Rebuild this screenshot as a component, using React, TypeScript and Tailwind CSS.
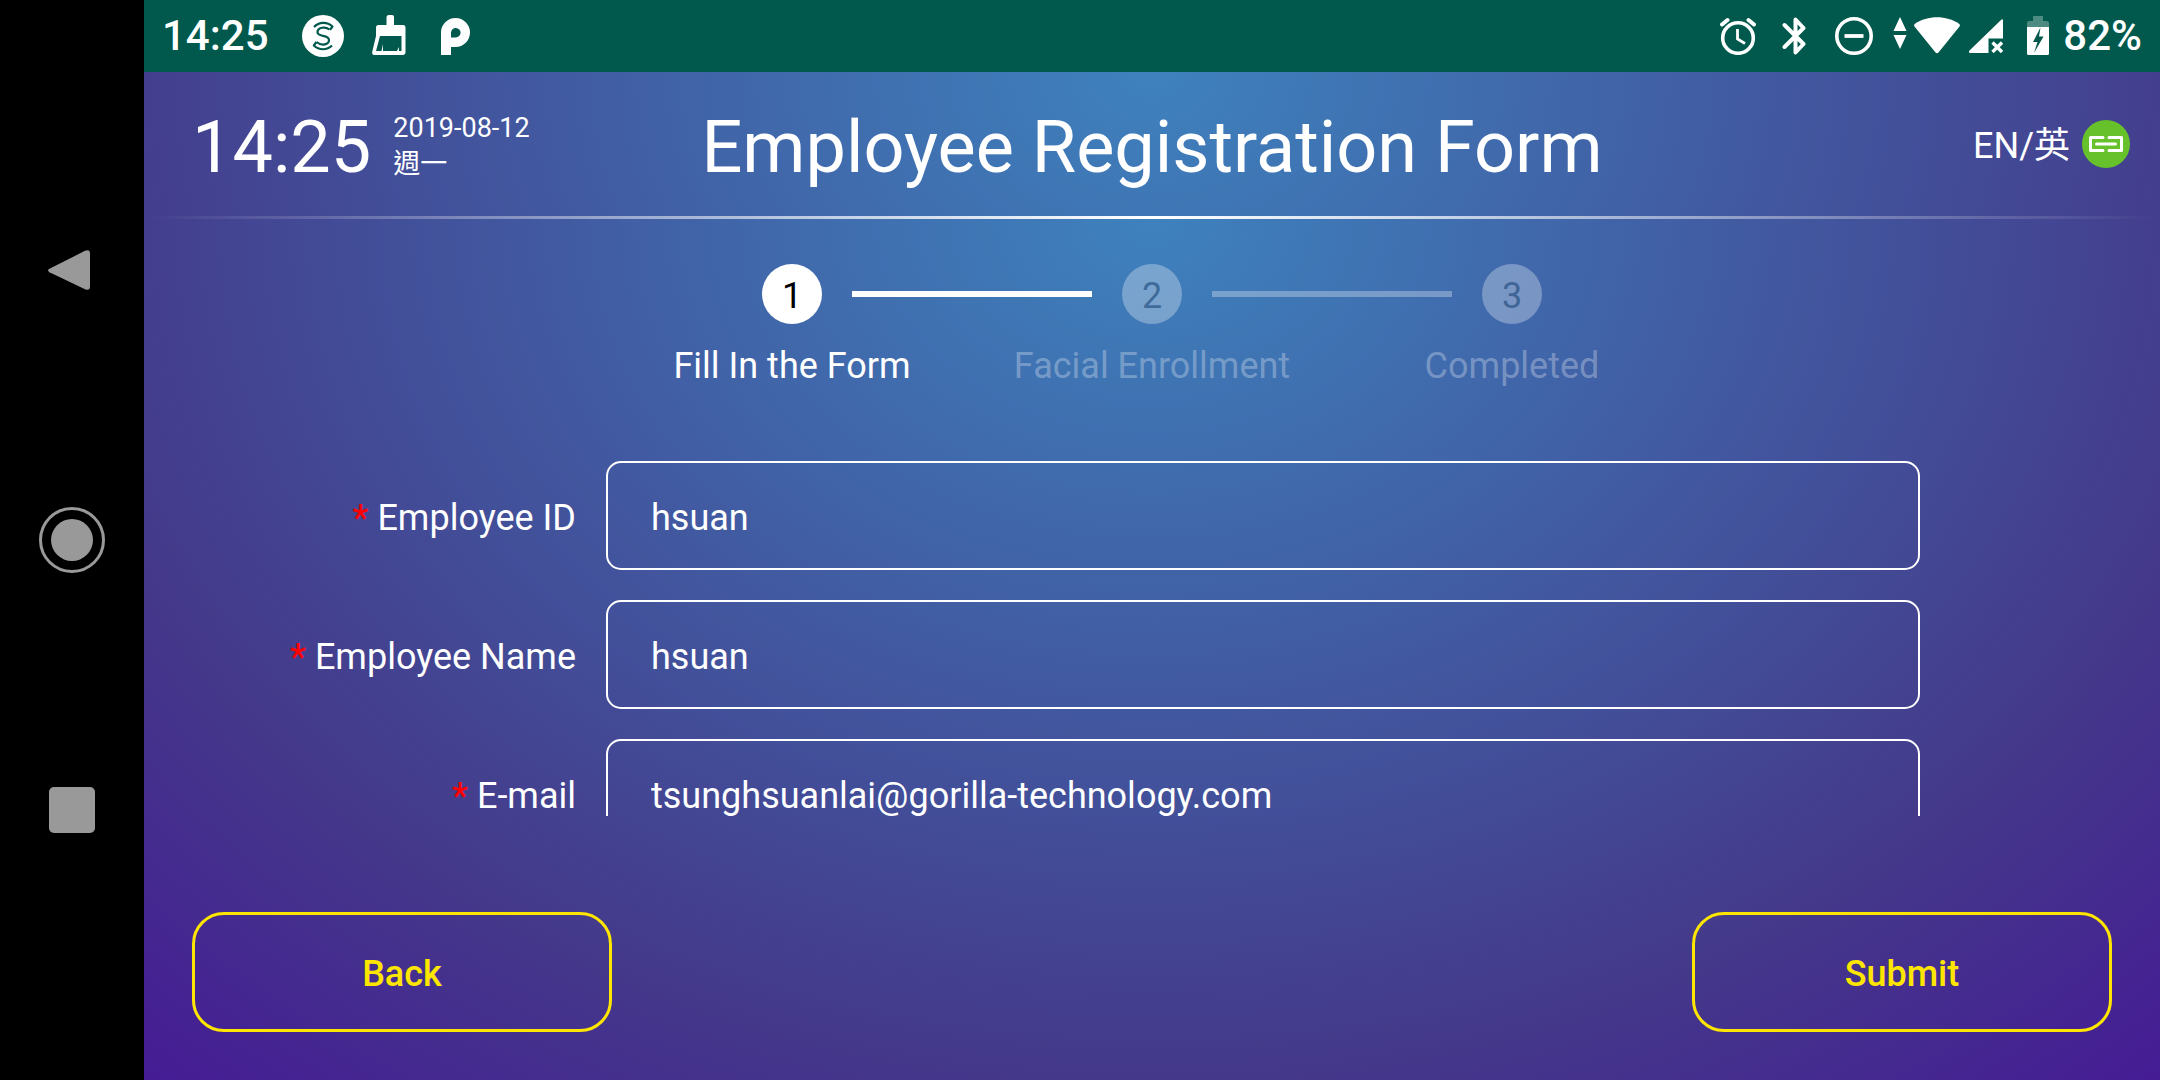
import type { ReactNode } from "react";

function StatusBar() {
  return (
    <header className="flex h-[72px] shrink-0 items-center justify-between bg-[#00594c] px-[18px] text-[42px] leading-[72px] font-medium">
      <div className="flex items-center">
        <span>14:25</span>
        <svg className="ml-[33px] size-[42px]" viewBox="0 0 42 42" fill="none" aria-hidden="true">
          <circle cx="21" cy="21" r="21" fill="#fff" />
          <g stroke="#00594c" strokeWidth="2.2" strokeLinejoin="round">
            <path d="M12 12C17 6.800 25 6.500 30.500 11.500L28 14.800" />
            <path d="M27.500 14.500C23 11 15.500 12.500 15.500 17.300C15.500 22.500 27 19 27 25C27 29.500 20 31.500 14.500 27" />
            <path d="M14.500 27L11.800 30.500C17 35.500 25 35.500 30 30.500" />
          </g>
        </svg>
        <svg className="ml-[28px] h-[42px] w-[34px]" viewBox="0 0 34 42" aria-hidden="true">
          <path
            fill="#fff"
            fillRule="evenodd"
            d="M17 0H20Q22 0 22 2V10H31Q33.500 10 33.500 12.500V37Q33.500 40 30.500 40H3Q-.5 40 .3 36.500L4 21V12.500Q4 10 6.500 10H14.500V2Q14.500 0 17 0ZM8 21L4 36H9.500L11 29V36H25L27 32V36H29.500V21Z"
          />
        </svg>
        <svg className="ml-[35px] h-[37px] w-[29px]" viewBox="0 0 29 37" aria-hidden="true">
          <path
            fill="#fff"
            fillRule="evenodd"
            d="M0 37V14.500A14.500 14.500 0 1 1 14.500 29H10V37ZM10 19.500V14.500A4.800 4.800 0 1 1 14.800 19.500Z"
          />
        </svg>
      </div>
      <div className="flex items-center">
        <svg className="h-[38px] w-[36px]" viewBox="0 0 36 38" fill="none" stroke="#fff" aria-hidden="true">
          <circle cx="18" cy="21" r="15.300" strokeWidth="3.600" />
          <path d="M2 7.500L7.500 3M34 7.500L28.500 3" strokeWidth="4" strokeLinecap="round" />
          <path d="M17.500 12V22L25 26.500" strokeWidth="2.800" />
        </svg>
        <svg className="ml-[26px] h-[38px] w-[24px]" viewBox="0 0 24 38" fill="none" stroke="#fff" aria-hidden="true">
          <path d="M2.500 8L21.500 27L13.500 35.500V2.500L21.500 11L2.500 30" strokeWidth="4" strokeLinecap="round" strokeLinejoin="round" />
        </svg>
        <svg className="ml-[29px] size-[38px]" viewBox="0 0 38 38" fill="none" stroke="#fff" aria-hidden="true">
          <circle cx="19" cy="19" r="17.200" strokeWidth="3.600" />
          <path d="M9.500 19H28.500" strokeWidth="3.800" />
        </svg>
        <svg className="ml-[20px] h-[38px] w-[68px]" viewBox="0 0 68 38" fill="#fff" aria-hidden="true">
          <path d="M7 0L13.500 14H.5ZM.5 18H13.500L7 32Z" />
          <path d="M21.500 9.500Q20.500 8 22 6.800C34 -2 54 -2 66 6.800Q67.500 8 66.500 9.500L45.500 35.500Q44 37 42.500 35.500Z" />
        </svg>
        <svg className="ml-[8px] h-[34px] w-[34px]" viewBox="0 0 34 34" aria-hidden="true">
          <path fill="#fff" d="M34 1V19.500H19.500V34H1Q-1 33 .5 31.500L32 1Q33.500 -.5 34 1Z" />
          <path d="M23.500 23.500L33 33M33 23.500L23.500 33" stroke="#fff" strokeWidth="3.400" />
        </svg>
        <svg className="ml-[24px] h-[40px] w-[22px]" viewBox="0 0 22 40" aria-hidden="true">
          <path fill="#4c8b82" d="M6 0H16V5H20Q22 5 22 7V12H0V7Q0 5 2 5H6Z" />
          <path
            fill="#fff"
            fillRule="evenodd"
            d="M0 11H22V37.500Q22 39 20.500 39H1.500Q0 39 0 37.500ZM13.500 11.500L6 26H10.500L7 37L16.500 20.500H12Z"
          />
        </svg>
        <span className="ml-[14px]">82%</span>
      </div>
    </header>
  );
}

function NavigationBar() {
  return (
    <nav aria-label="System" className="flex w-36 shrink-0 flex-col items-center justify-center gap-[204px] bg-black">
      <button type="button" aria-label="Back">
        <svg className="size-[66px]" viewBox="0 0 66 66" aria-hidden="true">
          <path
            fill="#999"
            d="M10.500 31.800L46 13.800Q51 12 51 16.500V49.500Q51 54 46 52.200L10.500 35.200Q7.500 33.500 10.500 31.800Z"
          />
        </svg>
      </button>
      <button type="button" aria-label="Home">
        <svg className="size-[66px]" viewBox="0 0 66 66" aria-hidden="true">
          <circle cx="33" cy="33" r="31.500" fill="none" stroke="#999" strokeWidth="3" />
          <circle cx="33" cy="33" r="21" fill="#999" />
        </svg>
      </button>
      <button type="button" aria-label="Overview">
        <svg className="size-[66px]" viewBox="0 0 66 66" aria-hidden="true">
          <rect x="10" y="10" width="46" height="46" rx="5" fill="#999" />
        </svg>
      </button>
    </nav>
  );
}

function TitleBar() {
  return (
    <div className="bg-[radial-gradient(1520px_1180px_at_50%_0,#3e82bd_0%,#44398a_72%,#451a95_100%)]">
      <div className="grid h-36 grid-cols-[1fr_auto_1fr] items-center px-[30px]">
        <div className="flex items-center pt-1 pl-[18px]">
          <time className="pt-1 text-[72px] leading-[84px]">14:25</time>
          <div className="ml-[22px] text-[27px] leading-9">
            <p>2019-08-12</p>
            <p>週一</p>
          </div>
        </div>
        <h1 className="pt-2 text-[72px] leading-[84px]">Employee Registration Form</h1>
        <div className="flex items-center justify-end gap-3">
          <button type="button" className="pt-1 text-[36px] leading-[42px]">
            EN/英
          </button>
          <svg className="size-12" viewBox="0 0 48 48" role="img" aria-label="Connected">
            <circle cx="24" cy="24" r="24" fill="#67c12b" />
            <path
              d="M21 17.500H8.500V30.500H21M27 17.500H39.500V30.500H27M14.500 24H33.500"
              fill="none"
              stroke="#fff"
              strokeWidth="3"
              strokeLinecap="round"
              strokeLinejoin="round"
            />
          </svg>
        </div>
      </div>
      <div className="h-[3px] bg-linear-to-r from-transparent via-white to-transparent" />
    </div>
  );
}

function Step({ number, label, active = false }: { number: number; label: string; active?: boolean }) {
  return (
    <li className="flex w-[360px] flex-col items-center text-[36px] leading-[42px]">
      <span
        className={
          active
            ? "flex size-[60px] items-center justify-center rounded-full bg-white pt-1 text-black"
            : "flex size-[60px] items-center justify-center rounded-full bg-white/30 pt-1 text-[#063468]/50"
        }
      >
        {number}
      </span>
      <span className={active ? "mt-[21px]" : "mt-[21px] text-white/30"}>{label}</span>
    </li>
  );
}

function Steps() {
  return (
    <div className="relative mt-[45px] flex justify-center">
      <ol className="flex">
        <Step number={1} label="Fill In the Form" active />
        <Step number={2} label="Facial Enrollment" />
        <Step number={3} label="Completed" />
      </ol>
      <div className="absolute inset-x-0 top-[27px] flex justify-center gap-[120px]" aria-hidden="true">
        <div className="h-[6px] w-[240px] bg-white" />
        <div className="h-[6px] w-[240px] bg-white/30" />
      </div>
    </div>
  );
}

function Field({ id, label, type = "text", value }: { id: string; label: string; type?: string; value: string }) {
  return (
    <div className="flex shrink-0 items-center">
      <label htmlFor={id} className="w-[432px] shrink-0 pt-1 text-right">
        <span className="font-medium text-[#ff0000]">*</span> {label}
      </label>
      <input
        id={id}
        type={type}
        defaultValue={value}
        required
        className="ml-[30px] h-[109px] min-w-0 flex-1 rounded-[15px] border-2 border-white bg-transparent px-[43px] pt-1 outline-none"
      />
    </div>
  );
}

function ActionButton({ type, children }: { type: "button" | "submit"; children: ReactNode }) {
  return (
    <button
      type={type}
      className="h-[120px] w-[420px] rounded-[32px] border-3 border-[#ffe600] pt-1 text-[36px] leading-[42px] font-medium text-[#ffe600]"
    >
      {children}
    </button>
  );
}

export default function App() {
  return (
    <div className="flex h-screen font-[Roboto,'Noto_Sans_CJK_TC',sans-serif] text-white">
      <NavigationBar />
      <div className="flex min-w-0 flex-1 flex-col">
        <StatusBar />
        <TitleBar />
        <main className="flex min-h-0 flex-1 flex-col bg-[radial-gradient(1520px_1180px_at_50%_0,#3e82bd_0%,#44398a_72%,#451a95_100%)]">
          <Steps />
          <form className="flex min-h-0 flex-1 flex-col">
            <div className="mt-[74px] flex min-h-0 flex-1 flex-col gap-[30px] overflow-hidden pr-[240px] text-[36px] leading-[42px]">
              <Field id="employee-id" label="Employee ID" value="hsuan" />
              <Field id="employee-name" label="Employee Name" value="hsuan" />
              <Field id="email" label="E-mail" type="email" value="tsunghsuanlai@gorilla-technology.com" />
            </div>
            <div className="mt-24 flex justify-between px-12 pb-12">
              <ActionButton type="button">Back</ActionButton>
              <ActionButton type="submit">Submit</ActionButton>
            </div>
          </form>
        </main>
      </div>
    </div>
  );
}
